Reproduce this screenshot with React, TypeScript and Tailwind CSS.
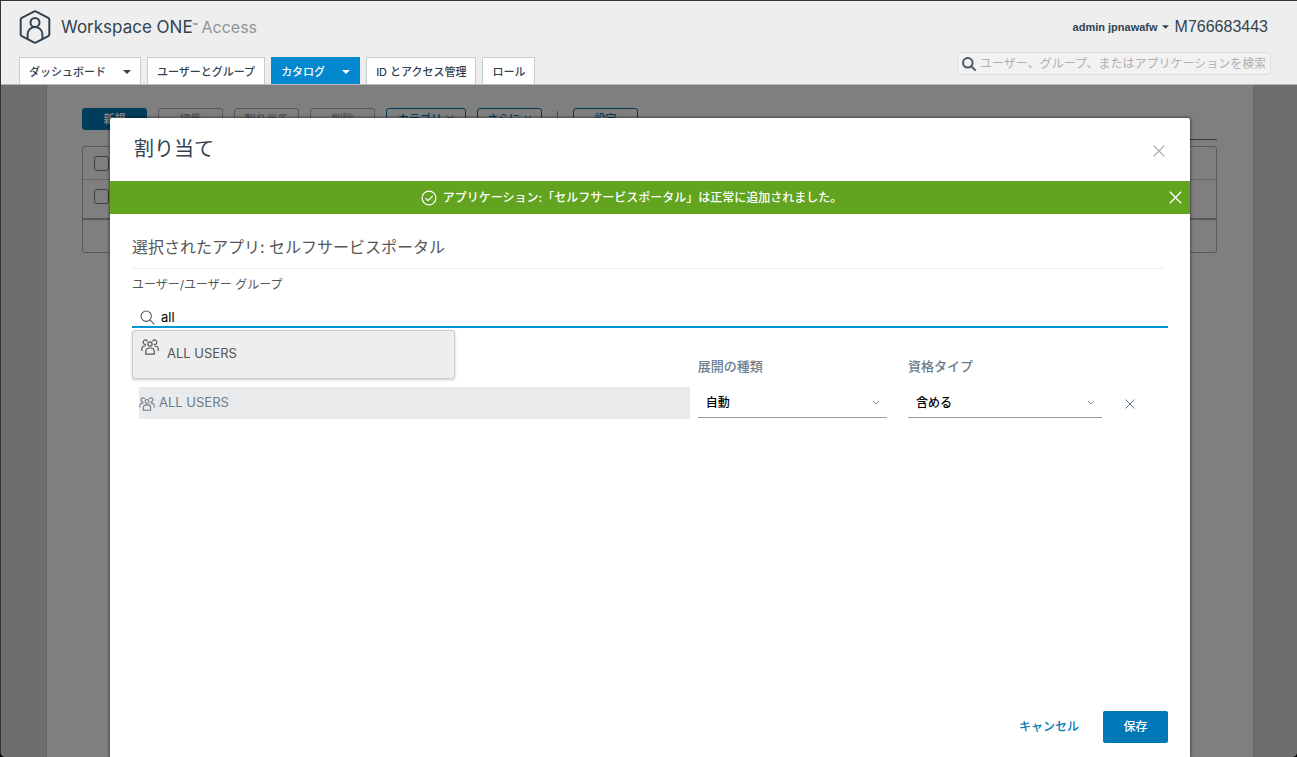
import { useState } from 'react';
import clsx from 'clsx';

interface IconProps {
  className?: string;
}

function LogoIcon({ className }: IconProps) {
  return (
    <svg className={className} viewBox="0 0 32 34" fill="none" stroke="currentColor" strokeWidth="2" strokeLinejoin="round" aria-hidden="true">
      <path d="M14.8 1.6a2.6 2.6 0 0 1 2.4 0l12 6.2a2 2 0 0 1 1.1 1.8v14.8a2 2 0 0 1-1.1 1.8l-12 6.2a2.6 2.6 0 0 1-2.4 0l-12-6.2a2 2 0 0 1-1.1-1.8V9.6a2 2 0 0 1 1.1-1.8z" />
      <circle cx="16" cy="12.4" r="4.5" />
      <path d="M8.6 29v-4.6a7.4 7.4 0 0 1 14.8 0V29" />
    </svg>
  );
}

function GroupIcon({ className }: IconProps) {
  return (
    <svg className={className} viewBox="0 0 18 16" fill="none" stroke="currentColor" strokeWidth="1.2" strokeLinecap="round" aria-hidden="true">
      <circle cx="9" cy="5" r="2.1" />
      <path d="M4.8 15.2v-3a3.2 3.2 0 0 1 3.2-3.2h2a3.2 3.2 0 0 1 3.2 3.2v3z" />
      <path d="M6.2 2A2.2 2.2 0 1 0 4.6 5.4M11.8 2a2.2 2.2 0 1 1 1.6 3.4" />
      <path d="M4.4 7H3.6A2.8 2.8 0 0 0 .8 9.8v1.6M13.6 7h.8a2.8 2.8 0 0 1 2.8 2.8v1.6" />
    </svg>
  );
}

function CloseIcon({ className }: IconProps) {
  return (
    <svg className={className} viewBox="0 0 12 12" fill="none" stroke="currentColor" strokeWidth="1.2" strokeLinecap="round" aria-hidden="true">
      <path d="M1 1l10 10M11 1L1 11" />
    </svg>
  );
}

function ChevronIcon({ className }: IconProps) {
  return (
    <svg className={className} viewBox="0 0 8 5" fill="none" stroke="currentColor" strokeWidth="1" aria-hidden="true">
      <path d="M1 1l3 3 3-3" />
    </svg>
  );
}

function CaretIcon({ className }: IconProps) {
  return (
    <svg className={className} viewBox="0 0 8 4" fill="currentColor" aria-hidden="true">
      <path d="M0 0h8L4 4z" />
    </svg>
  );
}

function SearchIcon({ className }: IconProps) {
  return (
    <svg className={className} viewBox="0 0 14 14" fill="none" stroke="currentColor" strokeLinecap="round" aria-hidden="true">
      <circle cx="5.8" cy="5.8" r="4.8" />
      <path d="M9.3 9.3l3.8 3.8" />
    </svg>
  );
}

const tabs = [
  { label: 'ダッシュボード', menu: true },
  { label: 'ユーザーとグループ' },
  { label: 'カタログ', menu: true, active: true },
  { label: 'ID とアクセス管理' },
  { label: 'ロール' },
];

function Header() {
  return (
    <header className="flex justify-between border-b border-[#b5b8b8] bg-[#eeeeee] pr-[26px] pl-[18px] text-[#314351]">
      <div className="flex flex-col justify-between">
        <div className="flex items-center gap-[10px] pt-[9px]">
          <LogoIcon className="h-[34px] w-8" />
          <p className="flex items-baseline gap-1 font-['Inter','Liberation_Sans',sans-serif] text-[17px] leading-6">
            <span>
              Workspace ONE<sup className="text-[8px]">™</sup>
            </span>
            <span className="text-[16px] text-[#8b9499]">Access</span>
          </p>
        </div>
        <nav className="flex gap-[6px]">
          {tabs.map((tab) => (
            <a
              key={tab.label}
              href="#"
              className={clsx(
                'flex h-[27px] items-center border border-b-0 px-[9px] pt-[2px] text-[11px] font-medium whitespace-nowrap',
                tab.active ? 'border-[#0288cf] bg-[#0288cf] text-white' : 'border-[#c9cccc] bg-white'
              )}
            >
              {tab.label}
              {tab.menu && <CaretIcon className="ml-[17px] h-1 w-2" />}
            </a>
          ))}
        </nav>
      </div>

      <div className="flex flex-col items-end gap-[13px] pt-[14px] pb-[9px]">
        <div className="flex items-center gap-[6px] pr-[3px] font-['Liberation_Sans',sans-serif]">
          <button className="flex items-center gap-1 text-[11px] font-bold">
            admin jpnawafw
            <CaretIcon className="h-[4px] w-[7px]" />
          </button>
          <span className="text-[16px] leading-6">M766683443</span>
        </div>
        <label className="flex h-[23px] w-[314px] items-center gap-1 rounded border border-[#dedede] bg-[#f2f2f2] pl-[4px]">
          <SearchIcon className="h-[14px] w-[14px] shrink-0 stroke-2 text-[#4a5963]" />
          <input
            type="text"
            aria-label="検索"
            placeholder="ユーザー、グループ、またはアプリケーションを検索"
            className="min-w-0 flex-1 text-[12px] outline-none placeholder:text-[#b0b0b0]"
          />
        </label>
      </div>
    </header>
  );
}

const toolbarButton = 'flex h-[22px] w-[65px] items-center justify-center gap-1 rounded-[3px] border text-[11px]';

function CatalogPage() {
  return (
    <main className="mr-[43px] ml-[45px] flex-1 border-x border-[#cccccc] bg-white pt-[23px] pr-9 pl-[35px]">
      <div className="flex items-center gap-[11px]">
        <button className={clsx(toolbarButton, 'border-[#0079b8] bg-[#0079b8] font-bold text-white')}>新規</button>
        {['編集', '割り当て', '削除'].map((label) => (
          <button key={label} disabled className={clsx(toolbarButton, 'border-[#b0b0b0] text-[#9a9a9a]')}>
            {label}
          </button>
        ))}
        <button className="flex h-[22px] w-[80px] items-center justify-center gap-1 rounded-[3px] border border-[#0079b8] text-[11px] font-medium text-[#0079b8]">
          カテゴリ
          <ChevronIcon className="mb-1 h-[5px] w-2" />
        </button>
        <button className={clsx(toolbarButton, 'border-[#0079b8] font-medium text-[#0079b8]')}>
          さらに
          <ChevronIcon className="mb-1 h-[5px] w-2" />
        </button>
        <div className="mx-1 h-4 w-px bg-[#9a9a9a]" />
        <button className={clsx(toolbarButton, 'border-[#0079b8] font-medium text-[#0079b8]')}>設定</button>
      </div>
      <div className="mt-[9px] ml-auto w-1/5 border-t border-[#737373]" />
      <div className="mt-[6px] rounded-[3px] border border-[#b0b0b0]">
        <div className="flex h-[33px] items-center border-b border-[#cccccc] pl-[11px]">
          <input type="checkbox" aria-label="すべて選択" className="h-[15px] w-[15px] appearance-none rounded-[3px] border border-[#808080]" />
        </div>
        <div className="flex h-10 items-start border-b-2 border-[#b0b0b0] pt-[9px] pl-[11px]">
          <input type="checkbox" aria-label="行を選択" className="h-[15px] w-[15px] appearance-none rounded-[3px] border border-[#808080]" />
        </div>
        <div className="h-8" />
      </div>
    </main>
  );
}

interface SelectFieldProps {
  label: string;
  options: string[];
}

function SelectField({ label, options }: SelectFieldProps) {
  return (
    <div className="relative mr-[21px]">
      <select aria-label={label} className="h-8 w-full appearance-none border-b border-[#9a9a9a] px-2 pt-[2px] text-[12px] font-medium text-black">
        {options.map((option) => (
          <option key={option}>{option}</option>
        ))}
      </select>
      <ChevronIcon className="pointer-events-none absolute top-[14px] right-[7px] h-[5px] w-2 text-[#8c8c8c]" />
    </div>
  );
}

function AssignDialog() {
  const [query, setQuery] = useState('all');

  return (
    <section
      role="dialog"
      aria-labelledby="assign-title"
      className="ml-[2px] flex w-5/6 flex-col rounded-t-[2px] bg-white text-[#565656] shadow-[0_0_3px_1px_rgba(0,0,0,0.45)]"
    >
      <div className="flex items-center justify-between py-4 pr-[25px] pl-6">
        <h1 id="assign-title" className="text-[20px] leading-[31px] text-[#314351]">
          割り当て
        </h1>
        <button aria-label="閉じる" className="pt-[2px] text-[#adadad]">
          <CloseIcon className="h-3 w-3" />
        </button>
      </div>

      {/* Success message */}
      <div className="flex h-[33px] items-center bg-[#62a420] pr-2 text-[12px] font-medium text-white">
        <div className="flex flex-1 items-center justify-center gap-[6px] pr-4">
          <svg className="h-4 w-4" viewBox="0 0 16 16" fill="none" stroke="currentColor" strokeWidth="1.2" aria-hidden="true">
            <circle cx="8" cy="8" r="6.9" />
            <path d="M4.5 8.2l2.5 2.5 4.7-4.9" />
          </svg>
          アプリケーション:「セルフサービスポータル」は正常に追加されました。
        </div>
        <button aria-label="メッセージを閉じる">
          <CloseIcon className="h-[13px] w-[13px]" />
        </button>
      </div>

      <div className="px-[22px] pt-[21px]">
        <h2 className="mr-[5px] border-b border-[#eeeeee] pb-[9px] text-[16px] leading-6">
          選択されたアプリ: セルフサービスポータル
        </h2>
        <label htmlFor="user-search" className="mt-2 block text-[12px] leading-4">
          ユーザー/ユーザー グループ
        </label>
        <div className="relative">
          <div className="mt-[15px] flex h-[20px] items-center gap-[6px] border-b-2 border-[#0095d3] pl-2">
            <SearchIcon className="h-[15px] w-[15px] shrink-0 stroke-1" />
            <input
              id="user-search"
              type="text"
              value={query}
              onChange={(e) => setQuery(e.target.value)}
              className="min-w-0 flex-1 text-[13px] leading-4 text-black outline-none"
            />
          </div>
          <button className="absolute top-full left-0 z-10 mt-[2px] flex h-[49px] w-[323px] gap-2 rounded-[3px] border border-[#cccccc] bg-[#eeeeee] pt-2 pl-[8px] text-[13px] shadow-[0_1px_3px_rgba(0,0,0,0.2)]">
            <GroupIcon className="h-4 w-[18px]" />
            <span className="pt-[6px] leading-4">ALL USERS</span>
          </button>
        </div>

        <table className="mt-[30px] w-full table-fixed">
          <thead>
            <tr className="text-left text-[13px] leading-4 text-[#6b7d8b]">
              <th className="w-[54.6%]" />
              <th className="w-[20.3%] font-medium">展開の種類</th>
              <th className="w-[20.8%] font-medium">資格タイプ</th>
              <th />
            </tr>
          </thead>
          <tbody>
            <tr className="align-top">
              <td className="pt-[13px] pr-2 pl-[7px]">
                <div className="flex h-8 items-center gap-1 bg-[#e9eaec] text-[13px] text-[#6b7d8b]">
                  <GroupIcon className="mt-[2px] h-[14px] w-4" />
                  ALL USERS
                </div>
              </td>
              <td className="pt-3">
                <SelectField label="展開の種類" options={['自動', 'ユーザーがアクティベーション']} />
              </td>
              <td className="pt-3">
                <SelectField label="資格タイプ" options={['含める', '除外する']} />
              </td>
              <td className="pt-[25px] pl-[2px]">
                <button aria-label="削除" className="flex text-[#6b7d8b]">
                  <CloseIcon className="h-[10px] w-[10px]" />
                </button>
              </td>
            </tr>
          </tbody>
        </table>
      </div>

      <div className="mt-auto flex justify-end gap-6 pr-[22px] pb-[14px] text-[12px] font-medium">
        <button className="text-[#0079b8]">キャンセル</button>
        <button className="h-8 w-[65px] rounded-[2px] bg-[#0079b8] text-white">保存</button>
      </div>
    </section>
  );
}

export default function App() {
  return (
    <div className="min-h-screen bg-black font-['Inter','Noto_Sans_CJK_JP',sans-serif]">
      <div className="flex min-h-screen flex-col overflow-hidden rounded-b-[5px] border-t border-l border-[#333338] bg-[#dadcdf]">
        <Header />
        <div className="relative flex flex-1 flex-col">
          <CatalogPage />
          <div className="absolute inset-0 flex justify-center bg-black/50 pt-[33px]">
            <AssignDialog />
          </div>
        </div>
      </div>
    </div>
  );
}
